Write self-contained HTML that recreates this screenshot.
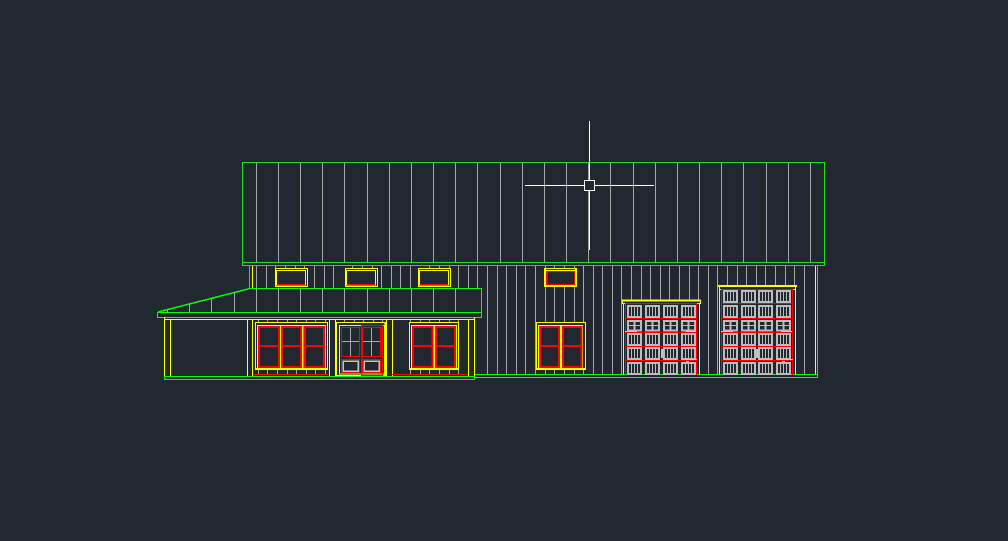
<!DOCTYPE html>
<html><head><meta charset="utf-8"><title>CAD elevation</title>
<style>html,body{margin:0;padding:0;background:#212830;width:1008px;height:541px;overflow:hidden}svg{display:block}</style></head>
<body>
<svg width="1008" height="541" viewBox="0 0 1008 541" xmlns="http://www.w3.org/2000/svg" shape-rendering="crispEdges" fill="none">
<defs>
<g id="p" stroke="#bcbcbc"><path stroke-width="2" d="M1 1h13v11h-13z"/><path d="M4.500 2v9M7.500 2v9M10.500 2v9"/></g>
<g id="q" stroke="#bcbcbc"><path stroke-width="2" d="M1 1h13v9.500h-13z"/><path d="M2 5.500h11"/><path stroke-width="2" d="M7.500 1v10"/></g>
<g id="b1"><use href="#p"/><use href="#p" x="18"/><use href="#p" x="36"/><use href="#p" x="54"/></g>
<g id="c1"><use href="#q"/><use href="#q" x="18"/><use href="#q" x="36"/><use href="#q" x="54"/></g>
<g id="b2"><use href="#p"/><use href="#p" x="18"/><use href="#p" x="35"/><use href="#p" x="53"/></g>
<g id="c2"><use href="#q"/><use href="#q" x="18"/><use href="#q" x="35"/><use href="#q" x="53"/></g>
</defs>

<!-- roof battens -->
<path stroke="#a8a8a8" d="M256.500 163V262M278.500 163V262M300.500 163V262M322.500 163V262M344.500 163V262M367.500 163V262M389.500 163V262M411.500 163V262M433.500 163V262M455.500 163V262M477.500 163V262M500.500 163V262M522.500 163V262M544.500 163V262M566.500 163V262M588.500 163V262M610.500 163V262M633.500 163V262M655.500 163V262M677.500 163V262M699.500 163V262M721.500 163V262M743.500 163V262M766.500 163V262M788.500 163V262M810.500 163V262"/>
<!-- roof -->
<path stroke="#1fe01f" d="M242.500 162.500H824.500V265.500H242.500ZM242.500 262.500H824.500"/>

<!-- upper wall battens -->
<path stroke="#a8a8a8" d="M256.500 266V288M266.500 266V288M314.500 266V288M324.500 266V288M333.500 266V288M381.500 266V288M391.500 266V288M400.500 266V288M410.500 266V288M458.500 266V288M468.500 266V288M477.500 266V288"/>
<path stroke="#a8a8a8" d="M275.500 266V268M285.500 266V268M295.500 266V268M304.500 266V268M352.500 266V268M362.500 266V268M372.500 266V268M429.500 266V268M439.500 266V268M449.500 266V268"/>
<!-- right wall battens -->
<path stroke="#a8a8a8" d="M487.500 266V375M497.500 266V375M506.500 266V375M516.500 266V375M525.500 266V375M535.500 266V375M545.500 266V375M554.500 266V375M564.500 266V375M574.500 266V375M583.500 266V375M593.500 266V375M602.500 266V375M612.500 266V375M621.500 266V375M631.500 266V300M641.500 266V300M650.500 266V300M660.500 266V300M669.500 266V300M679.500 266V300M689.500 266V300M698.500 266V300M708.500 266V375M717.500 266V375M727.500 266V286M737.500 266V286M746.500 266V286M756.500 266V286M765.500 266V286M775.500 266V286M785.500 266V286M794.500 266V286M804.500 266V375"/>
<!-- porch roof battens -->
<path stroke="#a8a8a8" d="M167.500 310V312M189.500 304V312M211.500 298V312M234.500 293V312M256.500 288V312M278.500 288V312M300.500 288V312M322.500 288V312M344.500 288V312M367.500 288V312M389.500 288V312M411.500 288V312M433.500 288V312M455.500 288V312"/>
<!-- lower ticks -->
<path stroke="#a8a8a8" d="M258.500 320V323M267.500 320V323M277.500 320V323M287.500 320V323M296.500 320V323M306.500 320V323M315.500 320V323M325.500 320V323M344.500 320V323M354.500 320V323M363.500 320V323M373.500 320V323M382.500 320V323M410.500 320V323M420.500 320V323M429.500 320V323M439.500 320V323M449.500 320V323M458.500 320V323M258.500 369V375M267.500 369V375M277.500 369V375M287.500 369V375M296.500 369V375M306.500 369V375M315.500 369V375M325.500 369V375M410.500 369V375M420.500 369V375M429.500 369V375M439.500 369V375M449.500 369V375M458.500 369V375"/>

<!-- wall outlines -->
<path stroke="#00ff00" d="M249.500 266V288M817.500 266V377.500H474M474 374.500H817"/>
<path stroke="#ffff00" d="M252.500 266V288M815.500 266V375"/>
<path stroke="#00ff00" d="M250 288.500H481.500V317.500H157.500V312.500H481"/>
<path stroke="#00ff00" stroke-width="1.500" d="M158 312L250 288.500"/>

<!-- porch -->
<path stroke="#ffff00" d="M164.500 317V376M170.500 319V376M247.500 319V376M252.500 319V376M329.500 319V376M335.500 319V376M386.500 319V376M392.500 319V376M468.500 319V376M474.500 317V376M164 319.500H474"/>
<path stroke="#ff0000" d="M253 374.500H329M392 374.500H468"/>
<path stroke="#00ff00" d="M164.500 376.500H474.500V379.500H164.500Z"/>

<!-- small upper windows -->
<g fill="#212830" stroke="#ffff00">
<path d="M275.500 268.500H307.500V286.500H275.500Z"/><path d="M345.500 268.500H377.500V286.500H345.500Z"/><path d="M418.500 268.500H450.500V286.500H418.500Z"/>
<path d="M276.500 270.500H305.500V285H276.500Z"/><path d="M346.500 270.500H375.500V285H346.500Z"/><path d="M419.500 270.500H448.500V285H419.500Z"/>
<path d="M544.500 268.500H576.500V286.500H544.500Z"/>
</g>
<path stroke="#ff0000" d="M277 284.500H305M347 284.500H375M420 284.500H448"/>
<path stroke="#ffff00" d="M545.500 269V286M575.500 269V286M545 285.500H576M545 270.500H576"/>
<path stroke="#ff0000" d="M546.500 271.500H574.500V284.500H546.500ZM547.500 272V284"/>

<!-- window 1 -->
<rect x="255.500" y="322.500" width="72" height="47" fill="#212830" stroke="#ffff00"/>
<path stroke="#ffff00" d="M257.500 325V369M325.500 325V369M257 325.500H326"/>
<path stroke="#ffff00" stroke-width="2" d="M255 369H328M280.500 325V369M302.500 325V369"/>
<path stroke="#ff0000" stroke-width="2" d="M259 327H279V367H259ZM282 327H301V367H282ZM305 327H324V367H305ZM259 346H279M282 346H301M305 346H324"/>

<!-- window 2 -->
<rect x="409.500" y="322.500" width="49" height="47" fill="#212830" stroke="#ffff00"/>
<path stroke="#ffff00" d="M411.500 325V369M456.500 325V369M411 325.500H457"/>
<path stroke="#ffff00" stroke-width="2" d="M409 369H459M434 325V369"/>
<path stroke="#ff0000" stroke-width="2" d="M413 327H432.500V367H413ZM436 327H455V367H436ZM413 346H432M436 346H455"/>

<!-- window 3 -->
<rect x="536.500" y="322.500" width="49" height="47" fill="#212830" stroke="#ffff00"/>
<path stroke="#ffff00" d="M538.500 325V369M582.500 325V369M538 325.500H583"/>
<path stroke="#ffff00" stroke-width="2" d="M536 369H586M561 325V369"/>
<path stroke="#ff0000" stroke-width="2" d="M540 327H559V367H540ZM563 327H581.500V367H563ZM540 346H559M563 346H581"/>

<!-- door -->
<rect x="336" y="322.500" width="50" height="53" fill="#212830" stroke="#ffff00"/>
<path stroke="#ffff00" d="M339.500 325.500H384.500V374H339.500Z"/>
<path stroke="#ffff00" stroke-width="2" d="M336 322V376M385.500 322V376"/>
<path stroke="#a8a8a8" d="M350.500 328V356M371.500 328V356M342 341.500H360M363 341.500H381"/>
<path stroke="#ff0000" d="M341.500 327.500H359.500V356.500H341.500ZM341.500 359.500H359.500V372.500H341.500ZM361.500 325.500H382.500V375.500H361.500ZM362.500 327.500H380.500V356.500H362.500ZM362.500 359.500H380.500V372.500H362.500Z"/>
<path stroke="#c4c4c4" stroke-width="1.500" d="M343 361H358V371H343ZM364 361H379V371H364Z"/>

<!-- garage door 1 -->
<g>
<use href="#b1" x="627" y="305"/><use href="#c1" x="627" y="320"/><use href="#b1" x="627" y="333"/><use href="#b1" x="627" y="347"/><use href="#b1" x="627" y="362"/>
<path stroke="#ffff00" stroke-width="2" d="M622 300.500H701"/>
<path stroke="#ffff00" d="M622.500 301V303.500H700.500V301M623.500 303V375M699.500 303V375"/>
<path stroke="#ff0000" d="M625.500 303V375M696.500 303V375M625 303.500H697M625 318.500H697M625 332.500H697M625 346.500H697M625 360.500H697"/>
<path stroke="#c4c4c4" d="M625 331.500H637M686 331.500H696M687 333.500H689M661.500 349V358M662.500 349V358M686 359.500H697M686 361.500H689"/>
</g>

<!-- garage door 2 -->
<g>
<use href="#b2" x="723" y="290"/><use href="#b2" x="723" y="305"/><use href="#c2" x="723" y="320"/><use href="#b2" x="723" y="333"/><use href="#b2" x="723" y="347"/><use href="#b2" x="723" y="362"/>
<path stroke="#ffff00" stroke-width="2" d="M718 286H797"/>
<path stroke="#ffff00" d="M719.500 287V289.500H795.500V287M719.500 289V375M795.500 289V375"/>
<path stroke="#ff0000" d="M721.500 289V375M792.500 289V375M721 289.500H793M721 303.500H793M721 318.500H793M721 332.500H793M721 346.500H793M721 360.500H793"/>
<path stroke="#c4c4c4" d="M721 331.500H733M781 331.500H792M782 333.500H784M756.500 349V358M757.500 349V358M782 359.500H793M782 361.500H785"/>
</g>

<!-- crosshair -->
<path stroke="#ffffff" d="M589.500 121V180M589.500 191V250M525 185.500H584M595 185.500H654"/>
<rect x="584.500" y="180.500" width="10" height="10" fill="#212830" stroke="#ffffff"/>
</svg>
</body></html>
